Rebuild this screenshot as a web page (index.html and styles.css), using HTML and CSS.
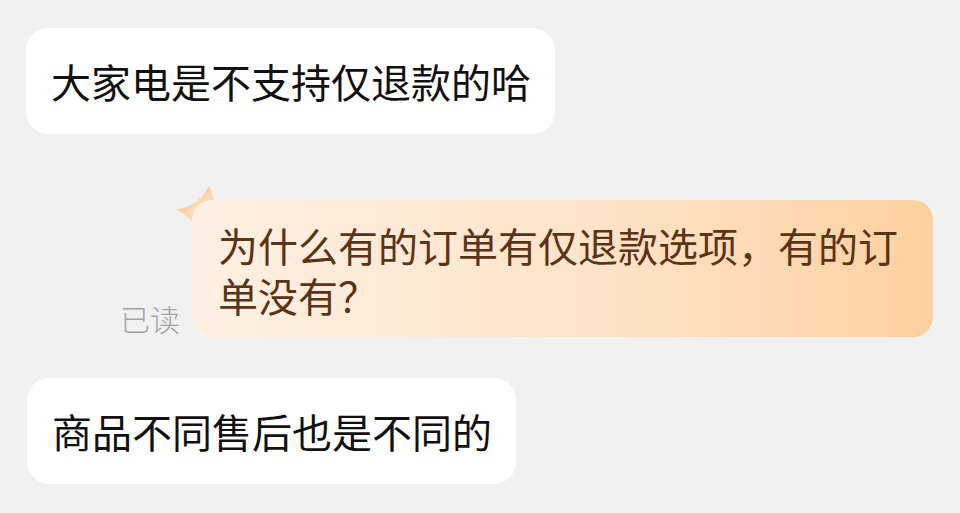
FILE: index.html
```html
<!DOCTYPE html>
<html>
<head>
  <meta charset="utf-8">
  <title>聊天记录</title>
  <link rel="stylesheet" href="styles.css">
</head>
<body>
  <main class="chat">
    <div class="row row-in">
      <div class="bubble bubble-in">大家电是不支持仅退款的哈</div>
    </div>

    <div class="row row-out">
      <span class="read-mark">已读</span>
      <div class="sent-wrap">
        <svg class="star" width="60" height="60" viewBox="0 0 60 60">
          <defs>
            <radialGradient id="starFill" cx="60%" cy="60%" r="55%">
              <stop offset="0%" stop-color="#fdeee0"/>
              <stop offset="100%" stop-color="#fbcf9f"/>
            </radialGradient>
          </defs>
          <path d="M34.5 1.5 Q38 24 58.5 34 Q36 38 26 58.5 Q22 36 1.5 25.5 Q24 22 34.5 1.5 Z" fill="url(#starFill)"/>
        </svg>
        <div class="bubble bubble-out">为什么有的订单有仅退款选项，有的订单没有？</div>
      </div>
    </div>

    <div class="row row-in row-last">
      <div class="bubble bubble-in">商品不同售后也是不同的</div>
    </div>
  </main>
</body>
</html>
```

FILE: styles.css
```css
/* Page */
body {
  margin: 0;
  background-color: #f1f1f1;
  font-family: 'Noto Sans CJK SC', 'Noto Sans', sans-serif;
}

/* Chat column */
.chat {
  display: flex;
  flex-direction: column;
  padding: 28px 27px 0 26px;
}

.row {
  display: flex;
}

.row-in {
  justify-content: flex-start;
}

.row-out {
  justify-content: flex-end;
  align-items: flex-end;
  gap: 12px;
  margin-top: 66px;
}

.row-last {
  margin-top: 41px;
  padding-left: 1px;
}

/* Bubbles */
.bubble {
  font-size: 40px;
  line-height: 56px;
  white-space: nowrap;
}

.bubble-in {
  background-color: #fff;
  color: #111;
  border-radius: 22px;
  padding: 25px 24px 25px 25px;
}

.sent-wrap {
  position: relative;
}

.bubble-out {
  position: relative;
  z-index: 1;
  box-sizing: border-box;
  width: 741px;
  white-space: normal;
  line-height: 50px;
  padding: 20px 35px 17px 26px;
  border-radius: 20px;
  color: #5a3417;
  background: linear-gradient(to right, #fdf0e3 0%, #fee3c8 55%, #fed09f 100%);
}

/* Little star on the corner of the sent bubble */
.star {
  position: absolute;
  left: -17px;
  top: -16px;
  z-index: 0;
}

.read-mark {
  font-size: 30px;
  line-height: 34px;
  font-weight: 300;
  color: #a3a3a3;
  padding-bottom: 2px;
}
```
